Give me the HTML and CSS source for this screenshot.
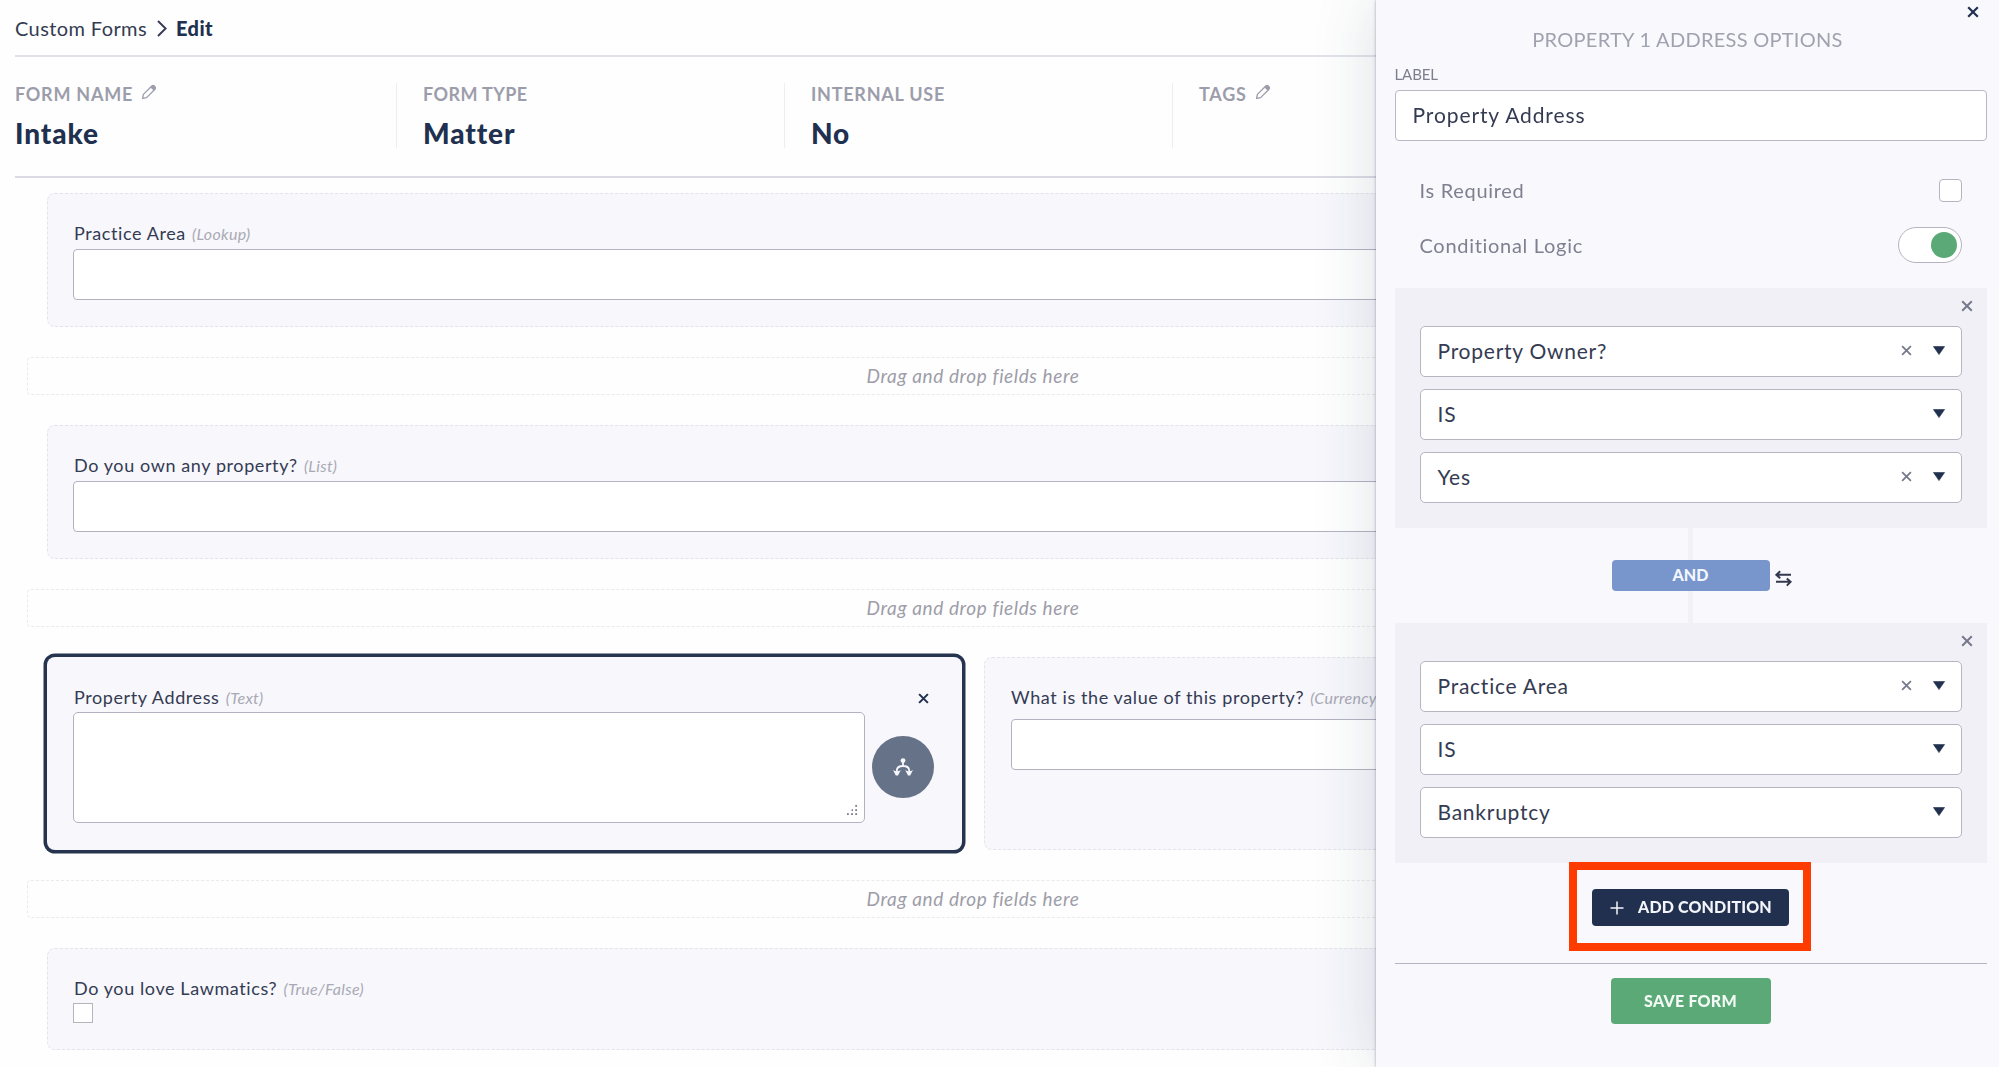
FILE: index.html
```html
<!DOCTYPE html>
<html lang="en">
  <head>
    <meta charset="utf-8">
    <title>Custom Forms - Edit</title>
    <link rel="stylesheet" href="styles.css">
  </head>
  <body>
    <!-- icons -->
    <svg class="sprite">
      <symbol id="icon-x" viewBox="0 0 12 12">
        <path d="M1.2 1.2 L10.8 10.8 M10.8 1.2 L1.2 10.8" fill="none" stroke="currentColor" />
      </symbol>
      <symbol id="icon-pencil" viewBox="0 0 16 16">
        <path d="M1.6 14.4 L2.4 10.4 L10.8 2 Q12 1 13.2 2.1 L14 2.9 Q15 4 14 5.2 L5.6 13.6 Z" fill="none" stroke="currentColor" stroke-width="1.3" stroke-linejoin="round" />
        <path d="M9.4 3.4 L11.2 1.6 Q12.4 0.8 13.6 1.8 L14.3 2.5 Q15.2 3.8 14.4 4.9 L12.6 6.6 Z" fill="currentColor" />
      </symbol>
      <symbol id="icon-caret" viewBox="0 0 12 9">
        <path d="M0.4 0.5 H11.6 L6 8.6 Z" fill="currentColor" stroke="currentColor" stroke-linejoin="round" stroke-width="0.6" />
      </symbol>
    </svg>

    <main class="page">
      <nav class="breadcrumb">
        <span class="crumb">Custom Forms</span>
        <svg class="chevron" viewBox="0 0 10 17"><path d="M1 1 L8.6 8.5 L1 16" /></svg>
        <span class="crumb-current">Edit</span>
      </nav>

      <header class="form-info">
        <div class="info">
          <div class="info-label">FORM NAME <svg class="pencil"><use href="#icon-pencil" /></svg></div>
          <div class="info-value">Intake</div>
        </div>
        <div class="info">
          <div class="info-label type">FORM TYPE</div>
          <div class="info-value">Matter</div>
        </div>
        <div class="info">
          <div class="info-label">INTERNAL USE</div>
          <div class="info-value">No</div>
        </div>
        <div class="info">
          <div class="info-label">TAGS <svg class="pencil"><use href="#icon-pencil" /></svg></div>
        </div>
      </header>

      <section class="form-body">
        <div class="row">
          <div class="card">
            <div class="card-label">Practice Area <em>(Lookup)</em></div>
            <div class="field"></div>
          </div>
        </div>
        <div class="dropzone">Drag and drop fields here</div>

        <div class="row">
          <div class="card">
            <div class="card-label">Do you own any property? <em>(List)</em></div>
            <div class="field"></div>
          </div>
        </div>
        <div class="dropzone">Drag and drop fields here</div>

        <div class="row two">
          <div class="card selected">
            <div class="card-label">
              <span>Property Address <em>(Text)</em></span>
              <svg class="card-close"><use href="#icon-x" /></svg>
            </div>
            <div class="textarea-row">
              <div class="textarea">
                <svg class="grip" viewBox="0 0 12 12">
                  <path d="M9 0h2v2h-2z M5 4.5h1.5v2h-1.5z M9 4.5h2v2h-2z M0 9h2v2h-2z M4.5 9h2v2h-2z M9 9h2v2h-2z" />
                </svg>
              </div>
              <div class="logic-btn">
                <svg viewBox="0 0 20 18">
                  <circle cx="10" cy="2.6" r="2.4" />
                  <path class="line" d="M10 4 V8 M3.8 14 V12.5 Q4 8 10 8 Q16 8 16.2 12.5 V14" />
                  <path d="M0 12 Q4 14.4 7.8 12 L5 17.6 H2.8 Z M12.2 12 Q16 14.4 20 12 L17.2 17.6 H15 Z" />
                </svg>
              </div>
            </div>
          </div>
          <div class="card">
            <div class="card-label">What is the value of this property? <em>(Currency)</em></div>
            <div class="field currency"></div>
          </div>
        </div>
        <div class="dropzone">Drag and drop fields here</div>

        <div class="row">
          <div class="card short">
            <div class="card-label">Do you love Lawmatics? <em>(True/False)</em></div>
            <div class="tick"></div>
          </div>
        </div>
      </section>
    </main>

    <aside class="panel">
      <svg class="panel-close"><use href="#icon-x" /></svg>
      <h2 class="panel-title">PROPERTY 1 ADDRESS OPTIONS</h2>

      <div class="input-label">LABEL</div>
      <div class="input">Property Address</div>

      <div class="option">
        <span class="required">Is Required</span>
        <div class="checkbox"></div>
      </div>
      <div class="option">
        <span>Conditional Logic</span>
        <div class="toggle"><div class="knob"></div></div>
      </div>

      <div class="condition">
        <svg class="condition-close"><use href="#icon-x" /></svg>
        <div class="select">
          <span>Property Owner?</span>
          <svg class="clear"><use href="#icon-x" /></svg>
          <svg class="caret"><use href="#icon-caret" /></svg>
        </div>
        <div class="select">
          <span>IS</span>
          <svg class="caret"><use href="#icon-caret" /></svg>
        </div>
        <div class="select">
          <span>Yes</span>
          <svg class="clear"><use href="#icon-x" /></svg>
          <svg class="caret"><use href="#icon-caret" /></svg>
        </div>
      </div>

      <div class="connector">
        <div class="and">AND
          <svg class="swap" viewBox="0 0 17 17">
            <path d="M16 4.8 H1.5 M5.2 1.2 L1.4 4.8 L5.2 8.2 M1 11.8 H15.5 M11.8 8.4 L15.6 11.8 L11.8 15.6" />
          </svg>
        </div>
      </div>

      <div class="condition">
        <svg class="condition-close"><use href="#icon-x" /></svg>
        <div class="select">
          <span>Practice Area</span>
          <svg class="clear"><use href="#icon-x" /></svg>
          <svg class="caret"><use href="#icon-caret" /></svg>
        </div>
        <div class="select">
          <span>IS</span>
          <svg class="caret"><use href="#icon-caret" /></svg>
        </div>
        <div class="select">
          <span>Bankruptcy</span>
          <svg class="caret"><use href="#icon-caret" /></svg>
        </div>
      </div>

      <div class="add-wrap">
        <div class="add-btn">
          <svg class="plus" viewBox="0 0 14 14"><path d="M7 0.5 V13.5 M0.5 7 H13.5" /></svg>
          ADD CONDITION
        </div>
        <div class="highlight"></div>
      </div>

      <div class="panel-footer">
        <div class="save-btn">SAVE FORM</div>
      </div>
    </aside>
  </body>
</html>
```
FILE: styles.css
```css
* {
  box-sizing: border-box;
}

body {
  margin: 0;
  height: 1067px;
  overflow: hidden;
  background: #fefefe;
  color: #343b52;
  font-family: Lato, "Open Sans", sans-serif;
}

svg {
  display: block;
  flex: none;
}

.sprite {
  position: absolute;
  width: 0;
  height: 0;
}

.page {
  padding-left: 15px;
}

/* breadcrumb */

.breadcrumb {
  display: flex;
  align-items: center;
  height: 57px;
  border-bottom: 2px solid #e4e2e9;
  font-size: 20px;
  line-height: 30px;
  letter-spacing: 0.4px;
}

.crumb,
.crumb-current {
  margin-top: 1px;
}

.chevron {
  width: 10px;
  height: 17px;
  margin: 1px 9px 0 10px;
  fill: none;
  stroke: #343b52;
  stroke-width: 1.9;
}

.crumb-current {
  color: #20304e;
  font-weight: 900;
}

/* form info */

.form-info {
  display: grid;
  grid-template-columns: 382px 388px 388px 1fr;
  height: 121px;
  padding-top: 26px;
  border-bottom: 2px solid #dcdae4;
}

.info {
  height: 65px;
  padding-left: 26px;
  border-right: 1px solid #eeedf3;
}

.info:first-child {
  padding-left: 0;
}

.info:last-child {
  border-right: none;
}

.info-label {
  display: flex;
  height: 21px;
  color: #9c9dab;
  font-size: 18px;
  font-weight: 700;
  line-height: 22px;
  letter-spacing: 0.75px;
}

.info-label.type {
  letter-spacing: 0.4px;
}

.pencil {
  width: 16px;
  height: 16px;
  margin: 1px 0 0 8px;
}

.info-value {
  margin-top: 13px;
  color: #20304e;
  font-size: 28px;
  font-weight: 900;
  line-height: 32px;
  letter-spacing: 0.9px;
}

/* form builder */

.form-body {
  display: flex;
  flex-direction: column;
  gap: 30px;
  width: 1892px;
  margin-left: 12px;
  padding-top: 14.5px;
}

.row {
  display: grid;
  gap: 22px;
  padding: 0 20px;
}

.row.two {
  grid-template-columns: 1fr 1fr;
}

.card {
  height: 134px;
  padding: 28px 25px 0;
  background: #f7f7fc;
  border: 1px dashed #e4e3ea;
  border-radius: 8px;
}

.row.two .card {
  height: 193px;
}

.card.short {
  height: 102px;
}

.card.selected {
  border-color: #f7f7fc;
  box-shadow: 0 0 0 3.5px #26344f;
}

.card-label {
  display: flex;
  justify-content: space-between;
  padding-left: 1px;
  font-size: 18px;
  line-height: 23px;
  letter-spacing: 0.6px;
  white-space: pre;
}

.card:not(.selected) .card-label {
  justify-content: flex-start;
}

.card-label em {
  margin-left: 1px;
  color: #a9a9b5;
  font-size: 16px;
  letter-spacing: 0.3px;
}

.card-close {
  width: 11px;
  height: 11px;
  margin: 7px 7px 0 0;
  color: #20304e;
  stroke-width: 2.2;
}

.field {
  height: 51px;
  margin-top: 4px;
  background: #fff;
  border: 1px solid #b3b2c0;
  border-radius: 4px;
}

.field.currency {
  margin: 10px 0 0 1px;
}

.textarea-row {
  display: flex;
  align-items: center;
  margin-top: 3px;
}

.textarea {
  display: flex;
  align-items: flex-end;
  justify-content: flex-end;
  width: 792px;
  height: 111px;
  padding: 6px;
  background: #fff;
  border: 1px solid #b3b2c0;
  border-radius: 5px;
}

.grip {
  width: 11px;
  height: 11px;
  fill: #77788a;
}

.logic-btn {
  display: flex;
  align-items: center;
  justify-content: center;
  width: 62px;
  height: 62px;
  margin-left: 7px;
  background: #667288;
  border-radius: 50%;
}

.logic-btn svg {
  width: 20px;
  height: 18px;
  fill: #f5f7fb;
}

.logic-btn .line {
  fill: none;
  stroke: #f5f7fb;
  stroke-width: 1.8;
}

.tick {
  width: 20px;
  height: 20px;
  margin-top: 3px;
  background: #fff;
  border: 1px solid #b5b4bd;
}

.dropzone {
  height: 38px;
  border: 1px dashed #ebe9ef;
  border-radius: 4px;
  color: #9d9da8;
  font-size: 19px;
  font-style: italic;
  line-height: 36px;
  letter-spacing: 0.6px;
  text-align: center;
}

/* options panel */

.panel {
  position: fixed;
  top: 0;
  right: 0;
  bottom: 0;
  width: 623px;
  padding: 25px 12.5px 0 18.5px;
  background: #f8f8fd;
  box-shadow: 0 0 3px rgba(40, 50, 80, 0.4), 0 0 60px rgba(40, 60, 80, 0.16);
}

.panel-close {
  position: absolute;
  top: 6px;
  right: 20px;
  width: 12px;
  height: 12px;
  color: #20304e;
  stroke-width: 2.2;
}

.panel-title {
  margin: 0;
  padding-right: 6px;
  color: #a1a2af;
  font-size: 20px;
  font-weight: 400;
  line-height: 28px;
  letter-spacing: 0.28px;
  text-align: center;
}

.input-label {
  margin-top: 11px;
  color: #7d7e8e;
  font-size: 15px;
  line-height: 20px;
  letter-spacing: -0.1px;
}

.input {
  height: 51px;
  margin-top: 6px;
  padding-left: 17px;
  background: #fff;
  border: 1px solid #b9b8c4;
  border-radius: 4px;
  font-size: 21px;
  line-height: 48px;
  letter-spacing: 0.9px;
}

.option {
  display: flex;
  align-items: center;
  justify-content: space-between;
  height: 36px;
  margin-top: 25px;
  padding: 0 25px;
  color: #7e8090;
  font-size: 20px;
  letter-spacing: 0.7px;
}

.input + .option {
  height: 23px;
  margin-top: 38px;
}

.option span {
  padding-bottom: 1px;
}

.option .required {
  padding-bottom: 2px;
}

.checkbox {
  width: 23px;
  height: 23px;
  background: #fff;
  border: 1px solid #b5b4c0;
  border-radius: 4px;
}

.toggle {
  display: flex;
  align-items: center;
  justify-content: flex-end;
  width: 64px;
  height: 36px;
  padding-right: 4px;
  background: #fff;
  border: 1px solid #b5b4c0;
  border-radius: 18px;
}

.knob {
  width: 26px;
  height: 26px;
  background: #5aa977;
  border-radius: 50%;
}

.condition {
  position: relative;
  display: flex;
  flex-direction: column;
  gap: 12.5px;
  height: 240px;
  padding: 38px 25px 0;
  background: #f0f0f6;
}

.option + .condition {
  margin-top: 25px;
}

.condition-close {
  position: absolute;
  top: 12px;
  right: 13.5px;
  width: 12px;
  height: 12px;
  color: #77798b;
  stroke-width: 2;
}

.select {
  display: flex;
  align-items: center;
  height: 50.5px;
  padding: 0 16px 0 17px;
  background: #fff;
  border: 1px solid #b6b5c2;
  border-radius: 5px;
  font-size: 21px;
  letter-spacing: 0.75px;
}

.select span {
  flex: 1;
  padding-bottom: 1px;
}

.clear {
  width: 11px;
  height: 11px;
  margin: 0 21px 1px 0;
  color: #77798b;
  stroke-width: 1.9;
}

.caret {
  width: 12px;
  height: 9px;
  margin-bottom: 1px;
  color: #20304e;
}

.connector {
  height: 95px;
  padding-top: 32px;
  background: linear-gradient(#f1f1f6, #f1f1f6) center / 5px 100% no-repeat;
}

.and {
  position: relative;
  width: 158px;
  height: 31px;
  margin: 0 auto;
  background: #7896cc;
  border-radius: 4px;
  color: #f3f6fd;
  font-size: 16px;
  font-weight: 900;
  line-height: 29px;
  text-align: center;
}

.swap {
  position: absolute;
  top: 10px;
  left: 163px;
  width: 17px;
  height: 17px;
  fill: none;
  stroke: #33384e;
  stroke-width: 2;
}

.add-wrap {
  position: relative;
  display: flex;
  justify-content: center;
  padding: 26px 0 37px;
}

.add-btn {
  display: flex;
  align-items: center;
  width: 197px;
  height: 37px;
  padding: 0 0 3px 18px;
  background: #20304e;
  border-radius: 4px;
  color: #f3f5fa;
  font-size: 16px;
  font-weight: 900;
  letter-spacing: 0.15px;
  white-space: nowrap;
}

.plus {
  width: 14px;
  height: 14px;
  margin: 4px 14px 0 0;
  fill: none;
  stroke: #f3f5fa;
  stroke-width: 1.5;
}

/* call-out frame around the add button */
.highlight {
  position: absolute;
  top: -1px;
  left: 174px;
  width: 242px;
  height: 89px;
  border: 8.5px solid #ff3c00;
}

.panel-footer {
  padding-top: 14px;
  border-top: 1px solid #b4b4c0;
}

.save-btn {
  width: 160px;
  height: 46px;
  margin: 0 auto;
  background: #5aa977;
  border-radius: 4px;
  color: #f3faf5;
  font-size: 16px;
  font-weight: 900;
  line-height: 46px;
  letter-spacing: 0.25px;
  text-align: center;
}
```
